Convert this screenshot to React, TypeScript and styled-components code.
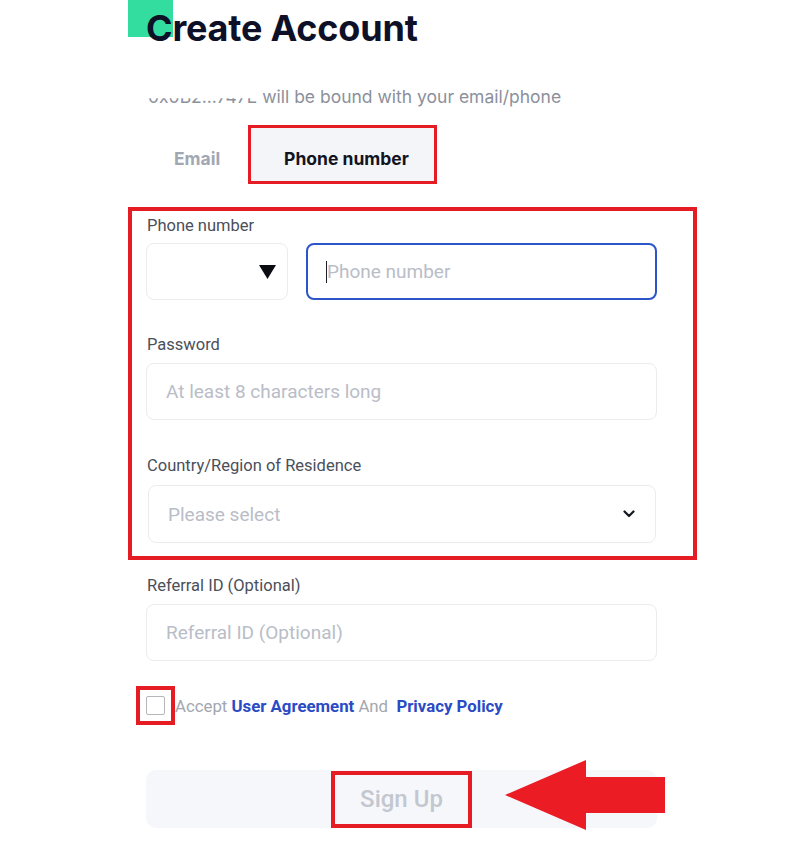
import React from "react";
import styled, { createGlobalStyle } from "styled-components";

const Global = createGlobalStyle`
  html, body { margin: 0; padding: 0; background: #ffffff; }
  body { font-family: Inter, "Noto Sans", sans-serif; }
  * { box-sizing: border-box; }
`;

const RED = "#e61c24";

const Page = styled.div`
  position: relative;
  width: 792px;
  height: 842px;
  overflow: hidden;
  background: #fff;
`;

const Column = styled.div`
  width: 511px;
  margin-left: 146px;
  display: flex;
  flex-direction: column;
`;

const Title = styled.h1`
  position: relative;
  z-index: 0;
  margin: 0;
  padding-top: 8px;
  font-family: Inter, sans-serif;
  font-weight: 700;
  font-size: 36px;
  line-height: 40px;
  color: #0d1027;
  letter-spacing: -0.2px;
  &::before {
    content: "";
    position: absolute;
    z-index: -1;
    left: -18px;
    top: 0;
    width: 45px;
    height: 37px;
    background: #33dda0;
  }
`;

const Subtitle = styled.p`
  margin: 38px 0 0 2px;
  font-family: Inter, sans-serif;
  font-size: 17.5px;
  line-height: 22px;
  color: #8b909c;
`;

const Clipped = styled.span`
  clip-path: inset(58% 0 0 0);
`;

const Tabs = styled.div`
  display: flex;
  align-items: center;
  margin-top: 17px;
`;

const Tab = styled.div<{ $active?: boolean }>`
  display: flex;
  align-items: center;
  justify-content: center;
  height: 53px;
  padding-top: 8px;
  padding-left: ${(p) => (p.$active ? "8px" : "0")};
  width: ${(p) => (p.$active ? "183px" : "102px")};
  font-family: Inter, sans-serif;
  font-weight: 700;
  font-size: 17.5px;
  color: ${(p) => (p.$active ? "#12141f" : "#a2a7b4")};
  background: ${(p) => (p.$active ? "#f4f5f9" : "transparent")};
`;

const Highlight = styled.div<{ $w?: number }>`
  border: ${(p) => p.$w ?? 4}px solid ${RED};
`;

const Group = styled.div`
  margin: 23px 0 0 -18px;
  width: 569px;
  border: 4px solid ${RED};
  padding: 0 36px 13px 14px;
`;

const Label = styled.div<{ $top: number }>`
  margin-top: ${(p) => p.$top}px;
  font-family: Roboto, sans-serif;
  font-size: 16.5px;
  line-height: 20px;
  color: #4a4f5a;
  margin-left: 1px;
`;

const Row = styled.div`
  display: flex;
  gap: 18px;
  margin-top: 7px;
`;

const Field = styled.div<{ $w?: number; $focus?: boolean; $pl?: number; $pr?: number; $h?: number }>`
  display: flex;
  align-items: center;
  width: ${(p) => (p.$w ? `${p.$w}px` : "100%")};
  height: ${(p) => p.$h ?? 57}px;
  margin-top: 8px;
  padding: 0 ${(p) => p.$pr ?? 20}px 0 ${(p) => p.$pl ?? 19}px;
  border: ${(p) => (p.$focus ? "2px solid #2c55c9" : "1px solid #ebecf0")};
  border-radius: 8px;
  background: #fff;
  font-family: Roboto, sans-serif;
  font-size: 19px;
  color: #b9bdc7;
`;

const RowField = styled(Field)`
  margin-top: 0;
`;

const Grow = styled.span`
  flex: 1;
`;

const Caret = styled.span`
  width: 1px;
  height: 22px;
  background: #1b1d2a;
`;

const Check = styled.div`
  width: 19px;
  height: 19px;
  border: 1px solid #b4b6ba;
  border-radius: 2px;
  background: #fff;
`;

const CheckBox = styled(Highlight)`
  padding: 6px;
`;

const AgreeRow = styled.div`
  display: flex;
  align-items: center;
  margin: 25px 0 0 -10px;
  font-family: Roboto, sans-serif;
  font-size: 16.8px;
  color: #a3a7b0;
`;

const Link = styled.span`
  color: #2a4bc4;
  font-weight: 700;
`;

const SignUp = styled.div`
  display: flex;
  align-items: center;
  justify-content: center;
  margin-top: 45px;
  height: 58px;
  border-radius: 10px;
  background: #f6f7fb;
`;

const SignUpLabel = styled(Highlight)`
  display: flex;
  align-items: center;
  justify-content: center;
  width: 141px;
  height: 57px;
  font-family: Roboto, sans-serif;
  font-weight: 500;
  font-size: 24px;
  color: #c3c7cf;
`;

const Arrow = styled.svg`
  position: absolute;
  left: 505px;
  top: 760px;
`;

export default function App() {
  return (
    <Page>
      <Global />
      <Column>
        <Title>Create Account</Title>
        <Subtitle>
          <Clipped>0x0B2...747E</Clipped> will be bound with your email/phone
        </Subtitle>
        <Tabs>
          <Tab>Email</Tab>
          <Highlight $w={3}>
            <Tab $active>Phone number</Tab>
          </Highlight>
        </Tabs>
        <Group>
          <Label $top={5}>Phone number</Label>
          <Row>
            <RowField $w={142} $pr={11}>
              <Grow />
              <svg width="17" height="14" viewBox="0 0 17 14">
                <polygon points="0,0 17,0 8.5,14" fill="#0b0c12" />
              </svg>
            </RowField>
            <RowField $w={351} $focus $pl={18}>
              <Caret />
              <span>Phone number</span>
            </RowField>
          </Row>
          <Label $top={35}>Password</Label>
          <Field>At least 8 characters long</Field>
          <Label $top={36}>Country/Region of Residence</Label>
          <Field $w={508} $h={58} style={{ marginLeft: 2, marginTop: 9 }}>
            <Grow>Please select</Grow>
            <svg width="12" height="8" viewBox="0 0 12 8">
              <path
                d="M1.5 1.5 L6 6 L10.5 1.5"
                fill="none"
                stroke="#14161f"
                strokeWidth="2.2"
                strokeLinecap="round"
                strokeLinejoin="round"
              />
            </svg>
          </Field>
        </Group>
        <Label $top={16}>Referral ID (Optional)</Label>
        <Field>Referral ID (Optional)</Field>
        <AgreeRow>
          <CheckBox>
            <Check />
          </CheckBox>
          <span>
            Accept <Link>User Agreement</Link> And&nbsp; <Link>Privacy Policy</Link>
          </span>
        </AgreeRow>
        <SignUp>
          <SignUpLabel>Sign Up</SignUpLabel>
        </SignUp>
      </Column>
      <Arrow width="160" height="70" viewBox="0 0 160 70">
        <polygon
          points="0,35 81,0 81,17 160,17 160,53 81,53 81,70"
          fill="#ec1c24"
        />
      </Arrow>
    </Page>
  );
}
